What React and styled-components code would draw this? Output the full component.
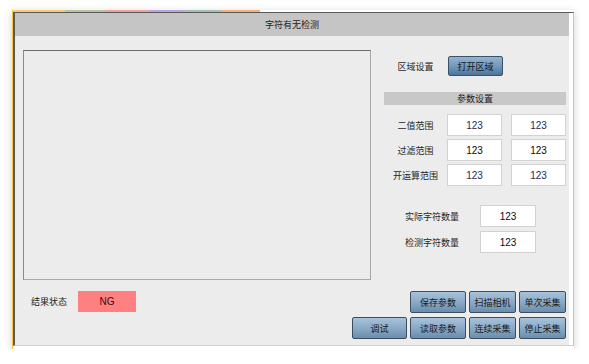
import React from 'react';
import styled, { createGlobalStyle } from 'styled-components';

const GlobalStyle = createGlobalStyle`
  html, body {
    margin: 0;
    padding: 0;
    background: #ffffff;
  }
  body {
    font-family: "Noto Sans CJK SC", "Noto Sans", sans-serif;
    font-size: 9px;
    color: #1c1c1c;
  }
`;

const Page = styled.div`
  padding: 10px 0 0 12px;
`;

const Window = styled.div`
  width: 561px;
  border-left: 1px solid #f3c54b;
  padding-bottom: 3px;
  background: #ffffff;
  box-shadow: 0 2px 8px rgba(0, 0, 0, 0.18);
`;

const Stripe = styled.div`
  display: flex;
  height: 2px;
`;

const StripePart = styled.div`
  width: ${(p) => p.$w}px;
  background: ${(p) => p.$c};
`;

const Frame = styled.div`
  display: flex;
  flex-direction: column;
  border-top: 1px solid #5a5a5a;
  border-left: 2px solid #5a5a5a;
  border-right: 1px solid #c4c4c4;
  border-bottom: 1px solid #cfcfcf;
  padding-right: 4px;
  background: #ffffff;
`;

const TitleBar = styled.div`
  height: 23px;
  background: #c5c5c5;
  display: flex;
  align-items: center;
  justify-content: center;
  color: #222;
`;

const Body = styled.div`
  height: 309px;
  box-sizing: border-box;
  background: #ececec;
  padding: 14px 3px 0 8px;
  display: flex;
  flex-direction: column;
`;

const TopRegion = styled.div`
  display: flex;
  height: 230px;
`;

const ImageBox = styled.div`
  width: 348px;
  height: 230px;
  box-sizing: border-box;
  border: 1px solid #a8a8a8;
  border-top-color: #6a6a6a;
  border-left-color: #8a8a8a;
`;

const RightPanel = styled.div`
  margin-left: 13px;
  width: 182px;
  display: flex;
  flex-direction: column;
`;

const AreaRow = styled.div`
  display: flex;
  align-items: center;
  height: 20px;
  margin-top: 6px;
`;

const Label = styled.div`
  width: ${(p) => p.$w || 63}px;
  flex: none;
  text-align: center;
  white-space: nowrap;
  color: #1e1e1e;
`;

const Button = styled.button`
  width: ${(p) => p.$w || 55}px;
  height: ${(p) => p.$h || 22}px;
  box-sizing: border-box;
  margin: 0;
  padding: 0;
  font-family: inherit;
  font-size: 9px;
  color: #1a1a1a;
  border: 1px solid #3e4d5c;
  border-radius: 2px;
  background: linear-gradient(#a8c3da, #88a7c4 55%, #6a8dae);
  grid-column: ${(p) => p.$col || 'auto'};
`;

const OpenButton = styled(Button)`
  margin-left: 1px;
  border-color: #3b5166;
  background: linear-gradient(#93b4d2, #6f95ba 55%, #4d7599);
`;

const SectionHeader = styled.div`
  margin-top: 16px;
  height: 13px;
  background: #c8c8c8;
  display: flex;
  align-items: center;
  justify-content: center;
  color: #222;
`;

const ParamList = styled.div`
  margin-top: 9px;
  display: flex;
  flex-direction: column;
  gap: 3px;
`;

const Row = styled.div`
  display: flex;
  align-items: center;
`;

const Field = styled.div`
  width: ${(p) => p.$w || 55}px;
  height: 22px;
  box-sizing: border-box;
  margin-left: ${(p) => p.$ml || 0}px;
  background: #ffffff;
  border: 1px solid #d2d2d2;
  display: flex;
  align-items: center;
  justify-content: center;
  font-family: "Liberation Sans", sans-serif;
  font-size: 10px;
  color: ${(p) => (p.$strong ? '#0a0a20' : '#2a2a4a')};
`;

const CountList = styled.div`
  margin-top: 19px;
  display: flex;
  flex-direction: column;
  gap: 4px;
`;

const BottomRegion = styled.div`
  margin-top: 11px;
  display: flex;
  justify-content: space-between;
`;

const Status = styled.div`
  display: flex;
  align-items: center;
  height: 22px;
  margin-top: -1px;
  padding-left: 8px;
`;

const StatusLabel = styled.div`
  color: #1e1e1e;
`;

const NgBox = styled.div`
  margin-left: 11px;
  width: 58px;
  height: 21px;
  background: #ff8080;
  display: flex;
  align-items: center;
  justify-content: center;
  font-family: "Liberation Sans", sans-serif;
  font-size: 10px;
  color: #3a0a0a;
`;

const ButtonGrid = styled.div`
  display: grid;
  grid-template-columns: 55px 56px 47px 47px;
  grid-template-rows: 22px 22px;
  column-gap: 3px;
  row-gap: 4px;
`;

const stripes = [
  [52, '#f6cf6a'],
  [40, '#b9c5a2'],
  [45, '#eaa3a0'],
  [35, '#bba4e2'],
  [37, '#a4c2b3'],
  [38, '#f2b476'],
];

const params = [
  { label: '二值范围', strong: false },
  { label: '过滤范围', strong: true },
  { label: '开运算范围', strong: false },
];

export default function App() {
  return (
    <Page>
      <GlobalStyle />
      <Window>
        <Stripe>
          {stripes.map(([w, c], i) => (
            <StripePart key={i} $w={w} $c={c} />
          ))}
        </Stripe>
        <Frame>
          <TitleBar>字符有无检测</TitleBar>
          <Body>
            <TopRegion>
              <ImageBox />
              <RightPanel>
                <AreaRow>
                  <Label>区域设置</Label>
                  <OpenButton $h={20}>打开区域</OpenButton>
                </AreaRow>
                <SectionHeader>参数设置</SectionHeader>
                <ParamList>
                  {params.map((p) => (
                    <Row key={p.label}>
                      <Label>{p.label}</Label>
                      <Field $strong={p.strong}>123</Field>
                      <Field $strong={p.strong} $ml={9}>123</Field>
                    </Row>
                  ))}
                </ParamList>
                <CountList>
                  <Row>
                    <Label $w={96}>实际字符数量</Label>
                    <Field $w={56} $strong>123</Field>
                  </Row>
                  <Row>
                    <Label $w={96}>检测字符数量</Label>
                    <Field $w={56} $strong>123</Field>
                  </Row>
                </CountList>
              </RightPanel>
            </TopRegion>
            <BottomRegion>
              <Status>
                <StatusLabel>结果状态</StatusLabel>
                <NgBox>NG</NgBox>
              </Status>
              <ButtonGrid>
                <Button $w={56} $col="2">保存参数</Button>
                <Button $w={47} $col="3">扫描相机</Button>
                <Button $w={47} $col="4">单次采集</Button>
                <Button $w={55} $col="1">调试</Button>
                <Button $w={56} $col="2">读取参数</Button>
                <Button $w={47} $col="3">连续采集</Button>
                <Button $w={47} $col="4">停止采集</Button>
              </ButtonGrid>
            </BottomRegion>
          </Body>
        </Frame>
      </Window>
    </Page>
  );
}
